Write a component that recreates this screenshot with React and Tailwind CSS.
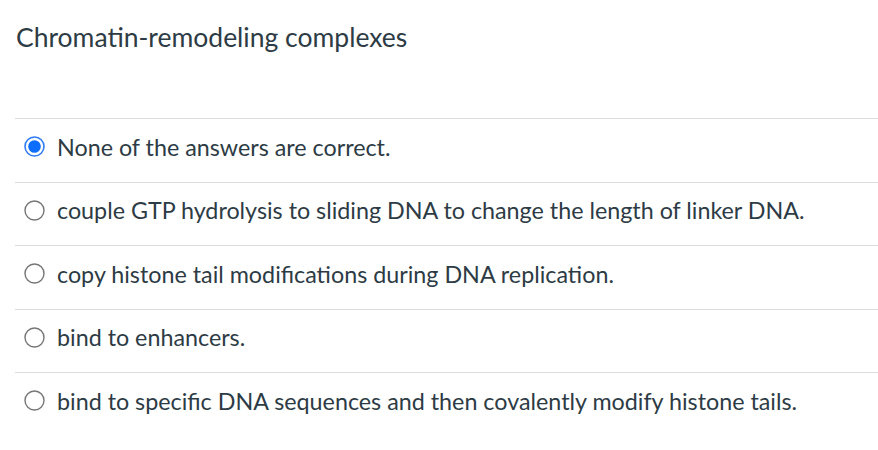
import React from 'react';

const answers = [
  { text: 'None of the answers are correct.', checked: true },
  { text: 'couple GTP hydrolysis to sliding DNA to change the length of linker DNA.' },
  { text: 'copy histone tail modifications during DNA replication.' },
  { text: 'bind to enhancers.' },
  { text: 'bind to specific DNA sequences and then covalently modify histone tails.' },
];

function Radio({ checked }) {
  return (
    <svg width="21" height="21" viewBox="0 0 21 21" className="shrink-0">
      {checked ? (
        <>
          <circle cx="10.5" cy="10.5" r="9.5" fill="#fff" stroke="#2f7cf6" strokeWidth="1.6" />
          <circle cx="10.5" cy="10.5" r="6.3" fill="#0d6efd" />
        </>
      ) : (
        <circle cx="10.5" cy="10.5" r="9.5" fill="#fff" stroke="#767676" strokeWidth="1.4" />
      )}
    </svg>
  );
}

export default function App() {
  return (
    <div className="w-[878px] h-[450px] bg-white text-[#2d3b45] overflow-hidden" style={{ fontFamily: 'Lato, "Open Sans", sans-serif' }}>
      <div className="pl-4 pt-[20px] h-[118px]">
        <h2 className="text-[26.5px] leading-[34px]">Chromatin-remodeling complexes</h2>
      </div>
      <div className="ml-[15px]">
        {answers.map((a) => (
          <div key={a.text} className="border-t border-[#dcdcdc] h-[63.5px] flex items-center gap-[12px] pl-[9px] pb-[7px]">
            <Radio checked={a.checked} />
            <span className="text-[23.3px] leading-[30px]">{a.text}</span>
          </div>
        ))}
      </div>
    </div>
  );
}
